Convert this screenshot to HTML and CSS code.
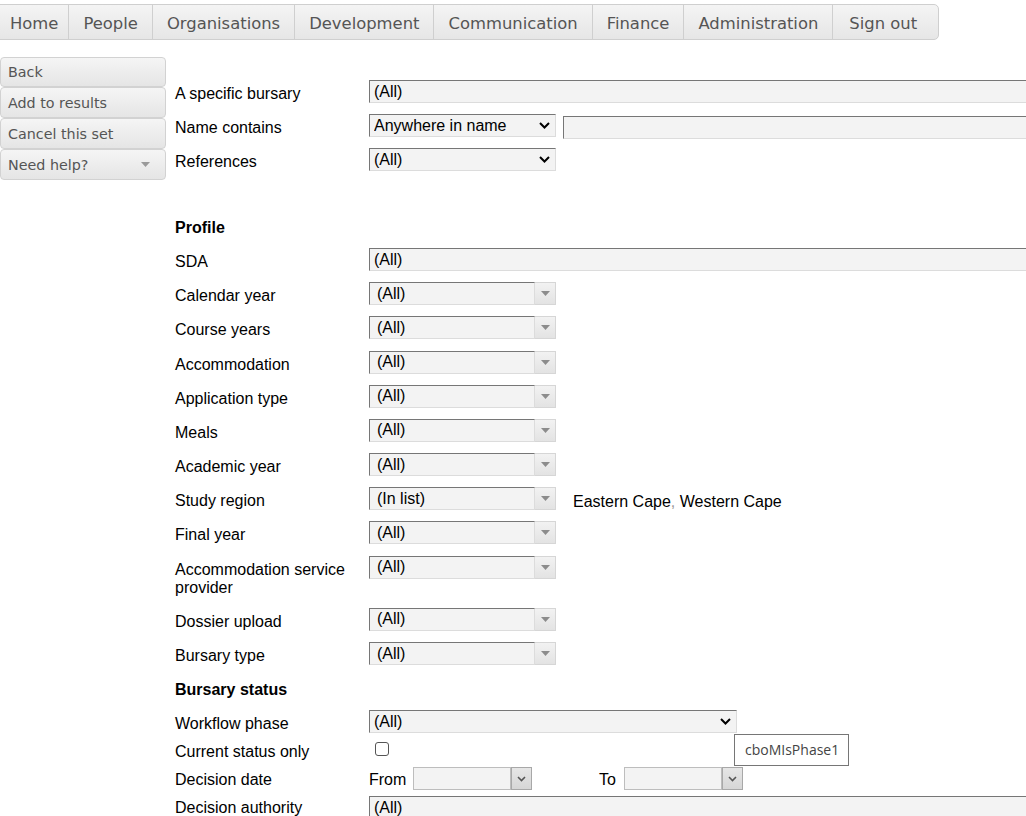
FILE: index.html
```html
<!DOCTYPE html>
<html lang="en">
<head>
<meta charset="utf-8">
<title>Bursary query</title>
<link rel="stylesheet" href="styles.css">
</head>
<body>
<nav class="topnav">
  <a href="#">Home</a>
  <a href="#">People</a>
  <a href="#">Organisations</a>
  <a href="#">Development</a>
  <a href="#">Communication</a>
  <a href="#">Finance</a>
  <a href="#">Administration</a>
  <a href="#">Sign out</a>
</nav>

<div class="page">
  <aside class="sidebar">
    <a class="side-btn" href="#">Back</a>
    <a class="side-btn" href="#">Add to results</a>
    <a class="side-btn" href="#">Cancel this set</a>
    <a class="side-btn side-btn-menu" href="#">Need help?<svg class="tri" width="9" height="5" viewBox="0 0 9 5"><path d="M0 0H9L4.5 5Z" fill="#9a9a9a"/></svg></a>
  </aside>

  <main class="form">
    <div class="row">
      <div class="label">A specific bursary</div>
      <div class="field"><select class="sel sel-wide"><option>(All)</option></select></div>
    </div>
    <div class="row">
      <div class="label">Name contains</div>
      <div class="field">
        <span class="selwrap"><select class="sel sel-mid"><option>Anywhere in name</option></select><svg class="chev" width="11" height="7" viewBox="0 0 11 7"><path d="M1 1L5.5 5.5L10 1" fill="none" stroke="#000" stroke-width="2"/></svg></span>
        <input class="text-input" type="text">
      </div>
    </div>
    <div class="row">
      <div class="label">References</div>
      <div class="field">
        <span class="selwrap"><select class="sel sel-mid"><option>(All)</option></select><svg class="chev" width="11" height="7" viewBox="0 0 11 7"><path d="M1 1L5.5 5.5L10 1" fill="none" stroke="#000" stroke-width="2"/></svg></span>
      </div>
    </div>

    <div class="spacer"></div>

    <div class="row"><div class="label heading">Profile</div><div></div></div>
    <div class="row">
      <div class="label">SDA</div>
      <div class="field"><select class="sel sel-wide"><option>(All)</option></select></div>
    </div>
    <div class="row">
      <div class="label">Calendar year</div>
      <div class="field"><span class="combo"><input class="combo-input" type="text" value="(All)" readonly><span class="combo-btn"><svg width="9" height="5" viewBox="0 0 9 5"><path d="M0 0H9L4.5 5Z" fill="#8c8c8c"/></svg></span></span></div>
    </div>
    <div class="row">
      <div class="label">Course years</div>
      <div class="field"><span class="combo"><input class="combo-input" type="text" value="(All)" readonly><span class="combo-btn"><svg width="9" height="5" viewBox="0 0 9 5"><path d="M0 0H9L4.5 5Z" fill="#8c8c8c"/></svg></span></span></div>
    </div>
    <div class="row">
      <div class="label">Accommodation</div>
      <div class="field"><span class="combo"><input class="combo-input" type="text" value="(All)" readonly><span class="combo-btn"><svg width="9" height="5" viewBox="0 0 9 5"><path d="M0 0H9L4.5 5Z" fill="#8c8c8c"/></svg></span></span></div>
    </div>
    <div class="row">
      <div class="label">Application type</div>
      <div class="field"><span class="combo"><input class="combo-input" type="text" value="(All)" readonly><span class="combo-btn"><svg width="9" height="5" viewBox="0 0 9 5"><path d="M0 0H9L4.5 5Z" fill="#8c8c8c"/></svg></span></span></div>
    </div>
    <div class="row">
      <div class="label">Meals</div>
      <div class="field"><span class="combo"><input class="combo-input" type="text" value="(All)" readonly><span class="combo-btn"><svg width="9" height="5" viewBox="0 0 9 5"><path d="M0 0H9L4.5 5Z" fill="#8c8c8c"/></svg></span></span></div>
    </div>
    <div class="row">
      <div class="label">Academic year</div>
      <div class="field"><span class="combo"><input class="combo-input" type="text" value="(All)" readonly><span class="combo-btn"><svg width="9" height="5" viewBox="0 0 9 5"><path d="M0 0H9L4.5 5Z" fill="#8c8c8c"/></svg></span></span></div>
    </div>
    <div class="row">
      <div class="label">Study region</div>
      <div class="field"><span class="combo"><input class="combo-input" type="text" value="(In list)" readonly><span class="combo-btn"><svg width="9" height="5" viewBox="0 0 9 5"><path d="M0 0H9L4.5 5Z" fill="#8c8c8c"/></svg></span></span><span class="list-text">Eastern Cape<span class="sep">,</span> Western Cape</span></div>
    </div>
    <div class="row">
      <div class="label">Final year</div>
      <div class="field"><span class="combo"><input class="combo-input" type="text" value="(All)" readonly><span class="combo-btn"><svg width="9" height="5" viewBox="0 0 9 5"><path d="M0 0H9L4.5 5Z" fill="#8c8c8c"/></svg></span></span></div>
    </div>
    <div class="row row-tall">
      <div class="label">Accommodation service provider</div>
      <div class="field"><span class="combo"><input class="combo-input" type="text" value="(All)" readonly><span class="combo-btn"><svg width="9" height="5" viewBox="0 0 9 5"><path d="M0 0H9L4.5 5Z" fill="#8c8c8c"/></svg></span></span></div>
    </div>
    <div class="row">
      <div class="label">Dossier upload</div>
      <div class="field"><span class="combo"><input class="combo-input" type="text" value="(All)" readonly><span class="combo-btn"><svg width="9" height="5" viewBox="0 0 9 5"><path d="M0 0H9L4.5 5Z" fill="#8c8c8c"/></svg></span></span></div>
    </div>
    <div class="row">
      <div class="label">Bursary type</div>
      <div class="field"><span class="combo"><input class="combo-input" type="text" value="(All)" readonly><span class="combo-btn"><svg width="9" height="5" viewBox="0 0 9 5"><path d="M0 0H9L4.5 5Z" fill="#8c8c8c"/></svg></span></span></div>
    </div>

    <div class="row"><div class="label heading">Bursary status</div><div></div></div>
    <div class="row row-short">
      <div class="label">Workflow phase</div>
      <div class="field">
        <span class="selwrap"><select class="sel sel-phase"><option>(All)</option></select><svg class="chev" width="11" height="7" viewBox="0 0 11 7"><path d="M1 1L5.5 5.5L10 1" fill="none" stroke="#000" stroke-width="2"/></svg></span>
      </div>
    </div>
    <div class="row row-short">
      <div class="label">Current status only</div>
      <div class="field"><input class="check" type="checkbox"></div>
    </div>
    <div class="row row-short">
      <div class="label">Decision date</div>
      <div class="field field-date">
        <span class="date-label">From</span>
        <span class="date"><input class="date-input" type="text"><span class="date-btn"><svg width="9" height="6" viewBox="0 0 9 6"><path d="M1 1L4.5 4.5L8 1" fill="none" stroke="#555" stroke-width="1.6"/></svg></span></span>
        <span class="date-label date-to">To</span>
        <span class="date"><input class="date-input" type="text"><span class="date-btn"><svg width="9" height="6" viewBox="0 0 9 6"><path d="M1 1L4.5 4.5L8 1" fill="none" stroke="#555" stroke-width="1.6"/></svg></span></span>
      </div>
    </div>
    <div class="row row-short">
      <div class="label">Decision authority</div>
      <div class="field field-last"><select class="sel sel-wide"><option>(All)</option></select></div>
    </div>
  </main>
</div>

<div class="tooltip">cboMIsPhase1</div>
</body>
</html>
```

FILE: styles.css
```css
html, body {
  margin: 0;
  padding: 0;
}

body {
  font-family: "Liberation Sans", Arial, sans-serif;
  font-size: 16px;
  color: #000;
  background: #fff;
  overflow: hidden;
  position: relative;
  height: 816px;
}

/* Top navigation */
.topnav {
  display: flex;
  width: max-content;
  height: 36px;
  box-sizing: border-box;
  margin: 4px 0 0 -1px;
  border: 1px solid #cfcfcf;
  border-radius: 0 5px 5px 0;
  background: linear-gradient(#f4f4f4, #e6e6e6);
  font-family: "DejaVu Sans", Verdana, sans-serif;
  font-size: 16.4px;
}

.topnav a {
  display: flex;
  align-items: center;
  padding: 3px 14px 0;
  color: #555;
  text-decoration: none;
  border-left: 1px solid #cfcfcf;
}

.topnav a:first-child {
  border-left: none;
  padding-left: 10px;
  padding-right: 10px;
}

.topnav a:last-child {
  padding-right: 21px;
  padding-left: 16px;
}

/* Page */
.page {
  display: flex;
  align-items: flex-start;
}

.sidebar {
  width: 166px;
  flex: none;
  margin-top: 17px;
  display: flex;
  flex-direction: column;
}

.side-btn {
  display: flex;
  align-items: center;
  justify-content: space-between;
  height: 31px;
  box-sizing: border-box;
  padding: 0 15px 0 7px;
  border: 1px solid #d2d2d2;
  border-radius: 4px;
  background: linear-gradient(#f5f5f5, #e5e5e5);
  color: #555;
  text-decoration: none;
  font-family: "DejaVu Sans", Verdana, sans-serif;
  font-size: 14.3px;
}

.side-btn:first-child {
  height: 30px;
}

.form {
  margin-left: 9px;
  padding-top: 40px;
  flex: 1;
  min-width: 0;
}

.row {
  display: grid;
  grid-template-columns: 194px 1fr;
  height: 34.2px;
}

.row-tall {
  height: 52.2px;
}

.row-short {
  height: 28px;
}

.spacer {
  height: 31.2px;
}

.label {
  padding-top: 5px;
  line-height: 18px;
  padding-right: 20px;
}

.heading {
  font-weight: bold;
}

.field {
  display: flex;
  align-items: flex-start;
  gap: 7px;
  white-space: nowrap;
}

/* Select boxes */
.selwrap {
  position: relative;
  display: inline-block;
  height: 23px;
}

.sel {
  appearance: none;
  -webkit-appearance: none;
  display: block;
  height: 23px;
  box-sizing: border-box;
  margin: 0;
  padding: 0 0 0 4px;
  border: 1px solid;
  border-color: #767676 #dcdcdc #dcdcdc #767676;
  border-radius: 0;
  background: #f3f3f3;
  font-family: "Liberation Sans", Arial, sans-serif;
  font-size: 16px;
  color: #000;
  outline: none;
}

.sel-wide {
  width: 700px;
}

.sel-mid {
  width: 187px;
}

.sel-phase {
  width: 368px;
}

.chev {
  position: absolute;
  right: 6px;
  top: 8px;
  pointer-events: none;
}

.text-input {
  width: 480px;
  height: 23px;
  box-sizing: border-box;
  margin: 2px 0 0;
  padding: 0 4px;
  border: 1px solid;
  border-color: #767676 #dcdcdc #dcdcdc #767676;
  background: #f3f3f3;
  font: 16px "Liberation Sans", Arial, sans-serif;
}

/* Combo boxes */
.combo {
  display: flex;
  height: 23px;
}

.combo-input {
  width: 166px;
  height: 23px;
  box-sizing: border-box;
  margin: 0;
  padding: 0 0 0 7px;
  border: 1px solid;
  border-color: #767676 #dcdcdc #dcdcdc #767676;
  background: #f3f3f3;
  font: 16px "Liberation Sans", Arial, sans-serif;
  color: #000;
  outline: none;
}

.combo-btn {
  width: 21px;
  height: 23px;
  box-sizing: border-box;
  border: 1px solid #d6d6d6;
  border-left: none;
  background: linear-gradient(#f2f2f2, #e3e3e3);
  display: flex;
  align-items: center;
  justify-content: center;
}

.list-text {
  margin-left: 10px;
  padding-top: 6px;
  line-height: 18px;
}

.sep {
  color: #999;
}

/* Checkbox */
.check {
  appearance: none;
  -webkit-appearance: none;
  width: 14px;
  height: 14px;
  box-sizing: border-box;
  margin: 4px 0 0 6px;
  border: 1px solid #555;
  border-radius: 3px;
  background: #fff;
}

/* Dates */
.field-date {
  gap: 0;
}

.date-label {
  padding-top: 5px;
  line-height: 18px;
  width: 44px;
}

.date-to {
  width: 25px;
  margin-left: 67px;
}

.date {
  display: flex;
  margin-top: 1px;
}

.date-input {
  width: 98px;
  height: 23px;
  box-sizing: border-box;
  margin: 0;
  border: 1px solid #bdbdbd;
  background: #f3f3f3;
  outline: none;
}

.date-btn {
  width: 21px;
  height: 23px;
  box-sizing: border-box;
  border: 1px solid #a8a8a8;
  background: linear-gradient(#e6e6e6, #d6d6d6);
  display: flex;
  align-items: center;
  justify-content: center;
}

.field-last {
  padding-top: 2px;
}

/* Tooltip */
.tooltip {
  position: absolute;
  left: 734px;
  top: 734px;
  width: 115px;
  height: 32px;
  box-sizing: border-box;
  padding-left: 10px;
  border: 1px solid #767676;
  background: #fff;
  font-family: "Open Sans", "Noto Sans", sans-serif;
  font-size: 14px;
  line-height: 29px;
  color: #444;
}
```
